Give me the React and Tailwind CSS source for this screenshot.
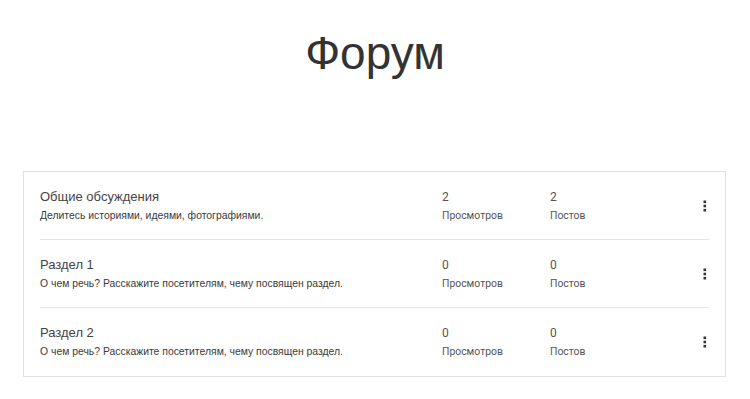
import React from 'react';

const sections = [
    { id: 1, title: 'Общие обсуждения', desc: 'Делитесь историями, идеями, фотографиями.', views: 2, posts: 2 },
    { id: 2, title: 'Раздел 1', desc: 'О чем речь? Расскажите посетителям, чему посвящен раздел.', views: 0, posts: 0 },
    { id: 3, title: 'Раздел 2', desc: 'О чем речь? Расскажите посетителям, чему посвящен раздел.', views: 0, posts: 0 },
];

const MoreIcon = () => (
    <svg width="4" height="12" viewBox="0 0 4 12" fill="#333">
        <rect x="0.5" y="0.5" width="2.6" height="2.6" />
        <rect x="0.5" y="4.7" width="2.6" height="2.6" />
        <rect x="0.5" y="8.9" width="2.6" height="2.6" />
    </svg>
);

const SectionRow = ({ section, last }) => (
    <div className={`flex items-center h-[68px] ${last ? '' : 'border-b border-[#e6e6e6]'}`}>
        <div className="flex-1 font-['Liberation_Sans',Arial,sans-serif]">
            <div className="text-[13px] leading-[18px] text-[#444]">{section.title}</div>
            <div className="text-[10.4px] leading-[16px] mt-[2px] text-[#3a3a3a]">{section.desc}</div>
        </div>
        <div className="w-[108px] font-['Roboto',sans-serif] text-[#555]">
            <div className="text-[12px] leading-[18px]">{section.views}</div>
            <div className="text-[10.4px] leading-[16px] mt-[2px]">Просмотров</div>
        </div>
        <div className="w-[151px] font-['Roboto',sans-serif] text-[#555]">
            <div className="text-[12px] leading-[18px]">{section.posts}</div>
            <div className="text-[10.4px] leading-[16px] mt-[2px]">Постов</div>
        </div>
        <div className="w-[8px] flex justify-center">
            <MoreIcon />
        </div>
    </div>
);

export default function App() {
    return (
        <div className="w-[750px] h-[399px] bg-white overflow-hidden">
            <h1 className="text-center text-[46px] leading-none pt-[30px] text-[#333] font-['Liberation_Sans',Arial,sans-serif]">
                Форум
            </h1>
            <div className="mt-[95px] ml-[23px] w-[703px] border border-[#e0e0e0] px-4">
                {sections.map((s, i) => (
                    <SectionRow key={s.id} section={s} last={i === sections.length - 1} />
                ))}
            </div>
        </div>
    );
}
